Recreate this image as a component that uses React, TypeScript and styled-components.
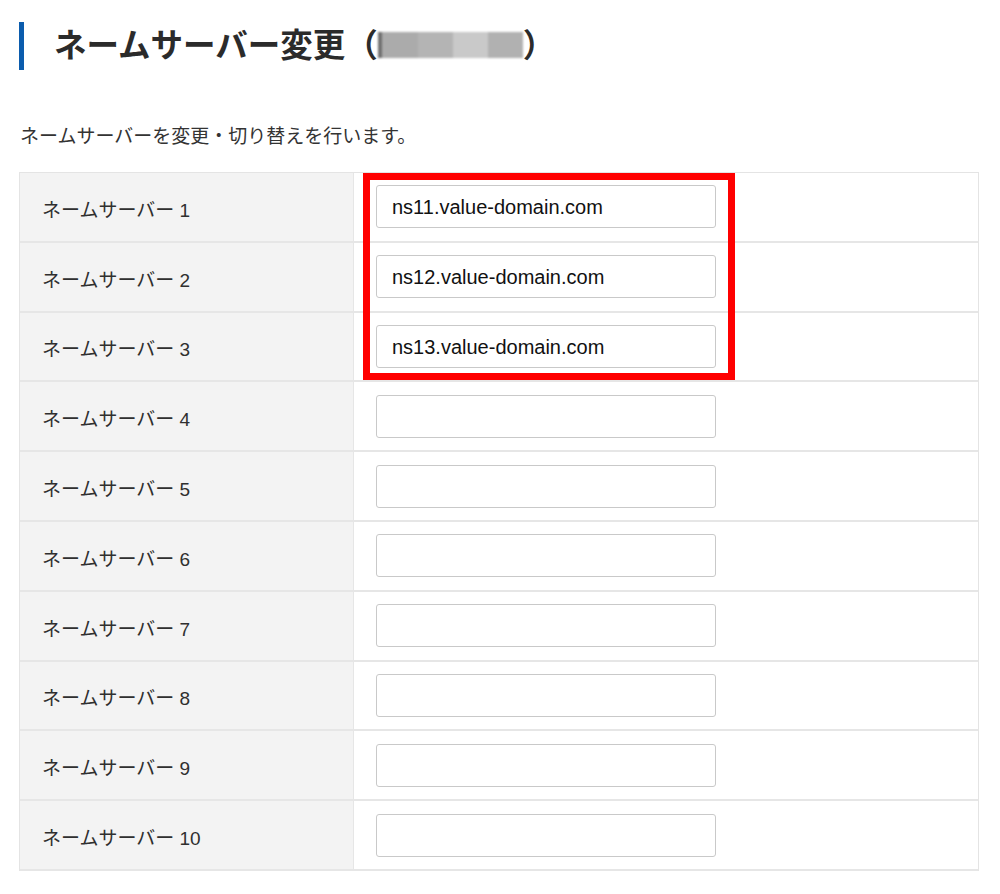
import React from 'react';
import styled, { createGlobalStyle } from 'styled-components';

const GlobalStyle = createGlobalStyle`
  body {
    margin: 0;
    background: #ffffff;
    font-family: "Liberation Sans", "Noto Sans CJK JP", sans-serif;
    color: #333333;
  }
`;

const Page = styled.div`
  padding: 22px 0 0 19px;
  width: 960px;
`;

const Title = styled.h1`
  margin: 0;
  height: 48px;
  line-height: 48px;
  border-left: 5px solid #0b5cad;
  padding-left: 30px;
  font-size: 32.5px;
  font-weight: 700;
  color: #2b2b2b;
  white-space: nowrap;
`;

const Redacted = styled.span`
  display: inline-flex;
  vertical-align: middle;
  height: 26px;
  margin-top: -6px;
  filter: blur(0.8px);
`;

const Shade = styled.span<{ $tone: string; $w: number }>`
  display: block;
  width: ${p => p.$w}px;
  height: 100%;
  background: ${p => p.$tone};
`;

const Lead = styled.p`
  margin: 53px 0 21px 1px;
  font-size: 19px;
  line-height: 28px;
  color: #333333;
`;

const Table = styled.div`
  position: relative;
  border: 1px solid #e4e4e4;
  border-bottom: none;
`;

const Row = styled.div`
  display: flex;
  height: 69.8px;
  box-sizing: border-box;
  border-bottom: 2px solid #e6e6e6;
`;

const Label = styled.div`
  width: 334px;
  flex-shrink: 0;
  box-sizing: border-box;
  padding-left: 22px;
  padding-top: 3px;
  display: flex;
  align-items: center;
  background: #f3f3f3;
  border-right: 1px solid #e6e6e6;
  font-size: 19px;
  color: #2f2f2f;
`;

const Value = styled.div`
  flex: 1;
  display: flex;
  align-items: center;
  padding-left: 22px;
  background: #ffffff;
`;

const Field = styled.input`
  width: 340px;
  height: 43px;
  box-sizing: border-box;
  border: 1px solid #c9c9c9;
  border-radius: 3px;
  padding: 2px 0 0 15px;
  font-family: "Liberation Sans", Arial, sans-serif;
  font-size: 20px;
  color: #111111;
  background: #ffffff;
  outline: none;
`;

const Highlight = styled.div`
  position: absolute;
  left: 343px;
  top: 0px;
  width: 372px;
  height: 207px;
  box-sizing: border-box;
  border: 7px solid #ff0000;
  pointer-events: none;
`;

const servers = [
  'ns11.value-domain.com',
  'ns12.value-domain.com',
  'ns13.value-domain.com',
  '', '', '', '', '', '', '',
];

export default function App() {
  return (
    <>
      <GlobalStyle />
      <Page>
        <Title>
          ネームサーバー変更（
          <Redacted>
            <Shade $tone="#6f6f6f" $w={4} />
            <Shade $tone="#ababab" $w={36} />
            <Shade $tone="#b4b4b4" $w={35} />
            <Shade $tone="#c9c9c9" $w={35} />
            <Shade $tone="#b1b1b1" $w={35} />
          </Redacted>
          ）
        </Title>
        <Lead>ネームサーバーを変更・切り替えを行います。</Lead>
        <Table>
          {servers.map((value, i) => (
            <Row key={i}>
              <Label>ネームサーバー {i + 1}</Label>
              <Value>
                <Field type="text" defaultValue={value} />
              </Value>
            </Row>
          ))}
          <Highlight />
        </Table>
      </Page>
    </>
  );
}
